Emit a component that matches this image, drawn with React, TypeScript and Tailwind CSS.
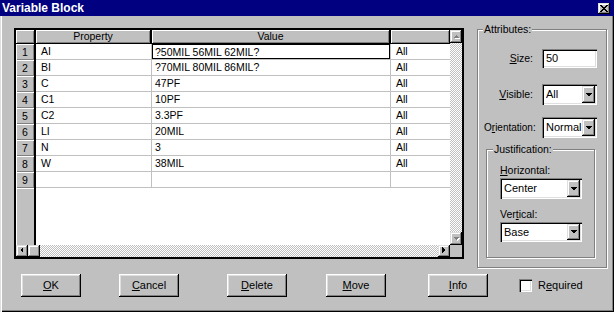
import React from "react";

const raised =
  "shadow-[inset_-1px_-1px_#000,inset_1px_1px_#fff,inset_-2px_-2px_#808080,inset_2px_2px_#dfdfdf]";
const scrollBtn =
  "shadow-[inset_-1px_-1px_#000,inset_1px_1px_#dfdfdf,inset_-2px_-2px_#808080,inset_2px_2px_#fff]";
const sunken =
  "shadow-[inset_1px_1px_#808080,inset_2px_2px_#000,inset_-1px_-1px_#fff,inset_-2px_-2px_#dfdfdf]";
const checker =
  "bg-[image:repeating-conic-gradient(#fff_0_25%,#c0c0c0_0_50%)] bg-[length:2px_2px]";

const rows = [
  ["AI", "?50MIL 56MIL 62MIL?", "All"],
  ["BI", "?70MIL 80MIL 86MIL?", "All"],
  ["C", "47PF", "All"],
  ["C1", "10PF", "All"],
  ["C2", "3.3PF", "All"],
  ["LI", "20MIL", "All"],
  ["N", "3", "All"],
  ["W", "38MIL", "All"],
  ["", "", ""],
];

function Arrow({ dir, disabled }: { dir: "up" | "down" | "left" | "right"; disabled?: boolean }) {
  const pts = {
    up: "1,4 4,1 7,4",
    down: "1,1 4,4 7,1",
    left: "4,0 1,3 4,6",
    right: "1,0 4,3 1,6",
  }[dir];
  const vert = dir === "up" || dir === "down";
  return (
    <svg width={vert ? 9 : 6} height={vert ? 6 : 8} shapeRendering="crispEdges">
      {disabled && <polygon points={pts} fill="#fff" transform="translate(1,1)" />}
      <polygon points={pts} fill={disabled ? "#808080" : "#000"} />
    </svg>
  );
}

function Select({ text, w, h }: { text: string; w: string; h: string }) {
  return (
    <div className={`${w} ${h} bg-white ${sunken} flex items-stretch p-[2px]`}>
      <div className="flex-1 pl-[2px] flex items-center text-[11px] leading-none">{text}</div>
      <div className={`w-[13px] bg-[#c0c0c0] ${scrollBtn} flex items-center justify-center`}>
        <svg width="7" height="4" shapeRendering="crispEdges">
          <polygon points="0,0 7,0 3.5,3.5" fill="#000" />
        </svg>
      </div>
    </div>
  );
}

function Btn({ u, rest, className = "" }: { u: string; rest: string; className?: string }) {
  return (
    <div
      className={`w-[60px] h-[23px] bg-[#c0c0c0] ${raised} flex items-center justify-center text-[11px] ${className}`}
    >
      <span>
        <span className="underline">{u}</span>
        {rest}
      </span>
    </div>
  );
}

export default function App() {
  return (
    <div className="w-[614px] h-[312px] bg-[#c0c0c0] font-['Liberation_Sans',Arial,sans-serif] text-black shadow-[inset_1px_0_#dfdfdf,inset_2px_0_#fff,inset_-1px_-1px_#000,inset_-2px_-2px_#808080] flex flex-col">
      {/* title bar */}
      <div className="h-[16px] bg-[#000080] flex items-center justify-between pl-[2px] pr-[4px]">
        <span className="text-white font-bold text-[12px] leading-none">Variable Block</span>
        <div className={`w-[12px] h-[11px] bg-[#c0c0c0] ${scrollBtn} flex items-center justify-center`}>
          <svg width="8" height="7" shapeRendering="crispEdges">
            <path d="M0 0h2v1h1v1h2v-1h1v-1h2v1h-1v1h-1v1h-1v1h1v1h1v1h1v1h-2v-1h-1v-1h-2v1h-1v1h-2v-1h1v-1h1v-1h1v-1h-1v-1h-1v-1h-1z" fill="#000" />
          </svg>
        </div>
      </div>

      <div className="flex items-start">
        {/* grid */}
        <div className="ml-[14px] mt-[12px] w-[450px] h-[231px] border-2 border-black bg-white flex text-[10.5px]">
          <div className="w-[434px] flex flex-col">
            <div className="flex h-[14px]">
              <div className={`w-[20px] bg-[#c0c0c0] border-r-2 border-b border-black ${"shadow-[inset_1px_1px_#fff,inset_-1px_-1px_#808080]"}`} />
              <div className="w-[116px] bg-[#c0c0c0] border-r-2 border-b border-black shadow-[inset_1px_1px_#fff,inset_-1px_-1px_#808080] flex items-center justify-center leading-none">
                Property
              </div>
              <div className="w-[239px] bg-[#c0c0c0] border-r-2 border-b border-black shadow-[inset_1px_1px_#fff,inset_-1px_-1px_#808080] flex items-center justify-center leading-none">
                Value
              </div>
              <div className="w-[59px] bg-[#c0c0c0] border-r border-b border-black shadow-[inset_1px_1px_#fff,inset_-1px_-1px_#808080]" />
            </div>
            {rows.map((r, i) => (
              <div key={i} className="flex h-[16px]">
                <div className="w-[20px] bg-[#c0c0c0] border-r-2 border-black shadow-[inset_1px_1px_#fff,inset_-1px_-1px_#808080] flex items-center justify-center leading-none">
                  {i + 1}
                </div>
                <div className="w-[116px] border-r border-b border-[#c0c0c0] pl-[5px] leading-[15px]">{r[0]}</div>
                <div className="w-[239px] border-r border-b border-[#c0c0c0]">
                  <div className={`h-full pl-[2px] leading-[14px] ${i === 0 ? "border border-black" : "pl-[3px] leading-[15px]"}`}>
                    {r[1]}
                  </div>
                </div>
                <div className="w-[59px] border-b border-[#c0c0c0] pl-[5px] leading-[15px]">{r[2]}</div>
              </div>
            ))}
            <div className="flex-1 flex">
              <div className="w-[20px] bg-[#c0c0c0] border-r-2 border-black shadow-[inset_1px_1px_#fff]" />
              <div className="flex-1 bg-white" />
            </div>
            <div className="h-[12px] flex">
              <div className={`w-[12px] bg-[#c0c0c0] ${scrollBtn} flex items-center justify-center`}>
                <Arrow dir="left" />
              </div>
              <div className={`w-[12px] bg-[#c0c0c0] ${scrollBtn}`} />
              <div className={`flex-1 ${checker}`} />
              <div className={`w-[12px] bg-[#c0c0c0] ${scrollBtn} flex items-center justify-center`}>
                <Arrow dir="right" />
              </div>
            </div>
          </div>
          <div className="w-[12px] flex flex-col">
            <div className={`h-[13px] bg-[#c0c0c0] ${scrollBtn} flex items-center justify-center`}>
              <Arrow dir="up" disabled />
            </div>
            <div className={`flex-1 ${checker}`} />
            <div className={`h-[13px] bg-[#c0c0c0] ${scrollBtn} flex items-center justify-center`}>
              <Arrow dir="down" disabled />
            </div>
            <div className="h-[12px] bg-[#c0c0c0]" />
          </div>
        </div>

        {/* attributes */}
        <div className="relative ml-[13px] mt-[13px] w-[130px] h-[239px] border border-[#808080] shadow-[inset_1px_1px_#fff,1px_1px_#fff] text-[10.5px]">
          <span className="absolute left-[5px] top-[-7px] bg-[#c0c0c0] px-[1px] leading-[12px]">Attributes:</span>
          <div className="flex items-center pl-[6px] mt-[19px]">
            <span className="w-[49px] text-right">
              <span className="underline">S</span>ize:
            </span>
            <div className={`ml-[9px] w-[55px] h-[19px] bg-white ${sunken} pl-[4px] flex items-center text-[11px] leading-none`}>
              50
            </div>
          </div>
          <div className="flex items-center pl-[6px] mt-[16px]">
            <span className="w-[49px] text-right">
              <span className="underline">V</span>isible:
            </span>
            <div className="ml-[9px]">
              <Select text="All" w="w-[55px]" h="h-[21px]" />
            </div>
          </div>
          <div className="flex items-center pl-[6px] mt-[12px]">
            <span className="w-[49px] text-right text-[10px] whitespace-nowrap">
              O<span className="underline">r</span>ientation:
            </span>
            <div className="ml-[9px]">
              <Select text="Normal" w="w-[55px]" h="h-[21px]" />
            </div>
          </div>
          <div className="relative ml-[8px] mt-[11px] w-[109px] h-[109px] border border-[#808080] shadow-[inset_1px_1px_#fff,1px_1px_#fff] pl-[13px]">
            <span className="absolute left-[6px] top-[-7px] bg-[#c0c0c0] px-[1px] leading-[12px]">Justification:</span>
            <div className="mt-[14px] leading-[12px]">
              <span className="underline">H</span>orizontal:
            </div>
            <div className="mt-[2px]">
              <Select text="Center" w="w-[82px]" h="h-[21px]" />
            </div>
            <div className="mt-[9px] leading-[12px]">
              Ver<span className="underline">t</span>ical:
            </div>
            <div className="mt-[2px]">
              <Select text="Base" w="w-[82px]" h="h-[20px]" />
            </div>
          </div>
        </div>
      </div>

      {/* buttons */}
      <div className="flex items-start mt-[6px] pl-[21px]">
        <Btn u="O" rest="K" />
        <Btn u="C" rest="ancel" className="ml-[38px]" />
        <Btn u="D" rest="elete" className="ml-[48px]" />
        <Btn u="M" rest="ove" className="ml-[39px]" />
        <Btn u="I" rest="nfo" className="ml-[42px]" />
        <div className="ml-[31px] mt-[3px] flex items-center">
          <div className={`w-[13px] h-[13px] bg-white ${sunken}`} />
          <span className="ml-[6px] text-[11px]">
            R<span className="underline">e</span>quired
          </span>
        </div>
      </div>
    </div>
  );
}
